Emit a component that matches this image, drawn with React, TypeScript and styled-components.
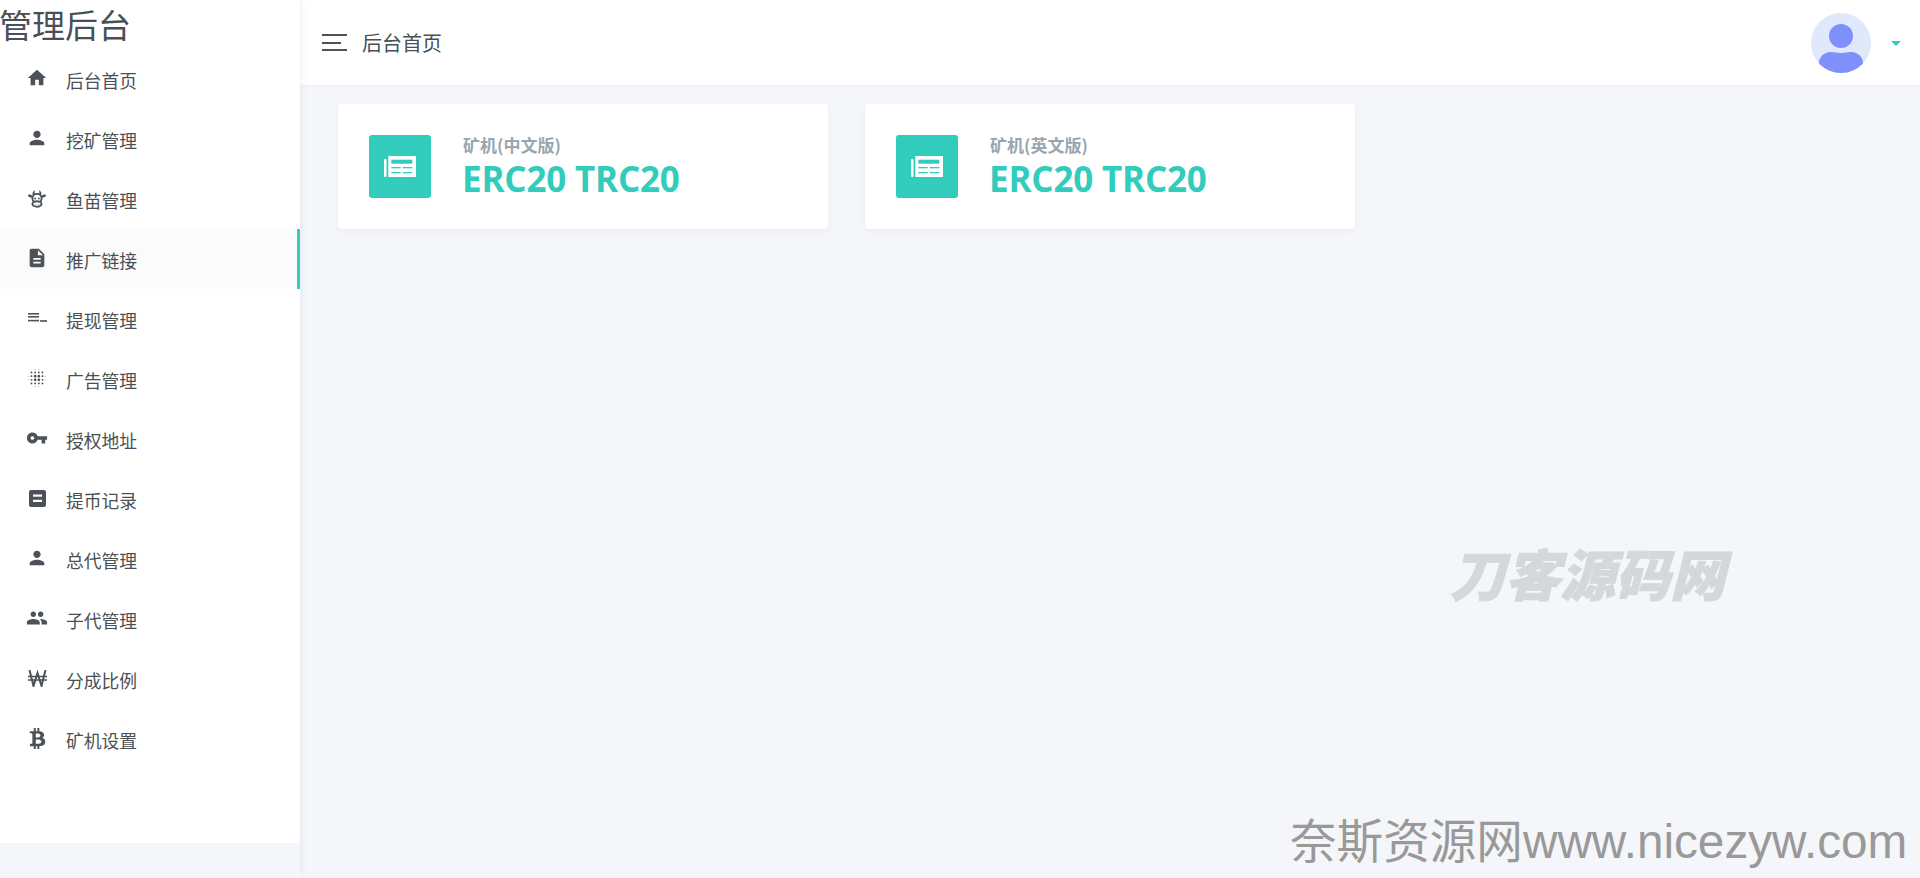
import * as React from "react";
import styled, {createGlobalStyle} from "styled-components";
import {MdHome, MdPerson, MdDescription, MdBlurOn, MdVpnKey, MdPeople} from "react-icons/md";
import {FaBtc} from "react-icons/fa";

const GlobalStyle = createGlobalStyle`
  html, body {
    margin: 0;
    height: 100%;
    overflow: hidden;
    background: #f4f6fa;
    font-family: "Noto Sans CJK SC", "Open Sans", sans-serif;
  }
`;

const Page = styled.div`
  position: relative;
  display: flex;
  width: 1920px;
  height: 878px;
  overflow: hidden;
`;

const Sidebar = styled.aside`
  width: 300px;
  flex-shrink: 0;
  height: 878px;
  box-shadow: 2px 0 6px rgba(60, 70, 100, 0.06);
  position: relative;
  z-index: 2;
`;

const SidebarPanel = styled.div`
  height: 843px;
  background: #fff;
`;

const Brand = styled.div`
  height: 49px;
  box-shadow: 0 1px 0 #f3f4f6;
  font-size: 33px;
  line-height: 49px;
  text-indent: -1px;
  color: #4a4f55;
  white-space: nowrap;
`;

const MenuList = styled.nav`
  display: flex;
  flex-direction: column;
`;

const MenuItem = styled.div<{$active?: boolean}>`
  height: 60px;
  box-sizing: border-box;
  display: flex;
  align-items: center;
  padding-left: 26px;
  background: ${p => (p.$active ? "#fbfbfc" : "#fff")};
  border-right: 3px solid ${p => (p.$active ? "#32ccbc" : "transparent")};
`;

const MenuIcon = styled.span`
  width: 22px;
  height: 24px;
  margin-right: 18px;
  margin-top: -2px;
  display: flex;
  align-items: center;
  justify-content: center;
  color: #4d5259;
  font-size: 22px;
`;

const MenuLabel = styled.span`
  padding-top: 1px;
  font-size: 17.8px;
  line-height: 24px;
  color: #4a4f55;
  white-space: nowrap;
`;

const Main = styled.main`
  flex: 1;
  display: flex;
  flex-direction: column;
`;

const Header = styled.header`
  height: 85px;
  flex-shrink: 0;
  display: flex;
  align-items: center;
  padding: 0 19px 0 22px;
  background: #fff;
  box-shadow: 0 1px 3px rgba(60, 70, 100, 0.05);
`;

const Burger = styled.svg`
  width: 25px;
  height: 17px;
  margin-right: 15px;
  flex-shrink: 0;
`;

const PageTitle = styled.div`
  font-size: 20px;
  color: #4a4f55;
  line-height: 28px;
  flex: 1;
`;

const Avatar = styled.svg`
  width: 60px;
  height: 60px;
  margin-right: 20px;
`;

const Caret = styled.span`
  width: 0;
  height: 0;
  margin-top: 1px;
  border-left: 5px solid transparent;
  border-right: 5px solid transparent;
  border-top: 5px solid #32ccbc;
`;

const Content = styled.div`
  display: flex;
  gap: 37px;
  padding: 19px 38px;
`;

const Card = styled.section`
  width: 490px;
  height: 125px;
  box-sizing: border-box;
  display: flex;
  align-items: center;
  padding: 0 0 0 31px;
  background: #fff;
  border-radius: 4px;
  box-shadow: 0 2px 6px rgba(60, 70, 100, 0.05);
`;

const IconTile = styled.div`
  width: 62px;
  height: 63px;
  margin-right: 32px;
  flex-shrink: 0;
  border-radius: 3px;
  background: #32ccbc;
  display: flex;
  align-items: center;
  justify-content: center;
`;

const CardText = styled.div`
  display: flex;
  flex-direction: column;
  gap: 2px;
`;

const CardLabel = styled.div`
  font-size: 17px;
  line-height: 22px;
  font-weight: 700;
  color: #98a6ad;
`;

const CardValue = styled.div`
  margin-left: -1px;
  font-family: "Open Sans", sans-serif;
  font-size: 35px;
  line-height: 42px;
  font-weight: 700;
  letter-spacing: -0.2px;
  color: #32ccbc;
  white-space: nowrap;
`;

const BrandMark = styled.div`
  position: absolute;
  left: 1450px;
  top: 537px;
  font-size: 55px;
  line-height: 70px;
  font-weight: 900;
  font-style: italic;
  color: #d5d8db;
  -webkit-text-stroke: 1px #d5d8db;
  white-space: nowrap;
`;

const SiteMark = styled.div`
  position: absolute;
  left: 1290px;
  top: 814px;
  font-family: "Liberation Sans", "Noto Sans CJK SC", sans-serif;
  font-size: 47.7px;
  line-height: 56px;
  color: #999;
  white-space: nowrap;
`;

const SiteMarkCjk = styled.span`
  font-size: 46.6px;
`;

function CowIcon() {
  return (
    <svg width="23" height="23" viewBox="0 0 24 24" fill="currentColor">
      <path d="M10.5,18A0.5,0.5 0 0,1 11,18.5A0.5,0.5 0 0,1 10.5,19A0.5,0.5 0 0,1 10,18.5A0.5,0.5 0 0,1 10.5,18M13.5,18A0.5,0.5 0 0,1 14,18.5A0.5,0.5 0 0,1 13.5,19A0.5,0.5 0 0,1 13,18.5A0.5,0.5 0 0,1 13.5,18M10,11A1,1 0 0,1 11,12A1,1 0 0,1 10,13A1,1 0 0,1 9,12A1,1 0 0,1 10,11M14,11A1,1 0 0,1 15,12A1,1 0 0,1 14,13A1,1 0 0,1 13,12A1,1 0 0,1 14,11M18,18C18,20.21 15.31,22 12,22C8.69,22 6,20.21 6,18C6,17.1 6.45,16.27 7.2,15.6C6.45,14.6 6,13.35 6,12L6.12,10.78C5.58,10.93 4.93,10.93 4.4,10.78C3.38,10.5 1.84,9.35 2.07,8.55C2.3,7.75 4.21,7.6 5.23,7.9C5.82,8.07 6.45,8.5 6.82,8.96L7.39,8.15C6.79,7.05 7,4 10,3L9.91,3.14C9.63,3.58 8.91,4.97 9.67,6.47C10.39,6.17 11.17,6 12,6C12.83,6 13.61,6.17 14.33,6.47C15.09,4.97 14.37,3.58 14.09,3.14L14,3C17,4 17.21,7.05 16.61,8.15L17.18,8.96C17.55,8.5 18.18,8.07 18.77,7.9C19.79,7.6 21.7,7.75 21.93,8.55C22.16,9.35 20.62,10.5 19.6,10.78C19.07,10.93 18.42,10.93 17.88,10.78L18,12C18,13.35 17.55,14.6 16.8,15.6C17.55,16.27 18,17.1 18,18M12,16C9.79,16 8,16.9 8,18C8,19.1 9.79,20 12,20C14.21,20 16,19.1 16,18C16,16.9 14.21,16 12,16M12,14C13.12,14 14.17,14.21 15.07,14.56C15.65,13.87 16,13 16,12A4,4 0 0,0 12,8A4,4 0 0,0 8,12C8,13 8.35,13.87 8.93,14.56C9.83,14.21 10.88,14 12,14Z"/>
    </svg>
  );
}

function LinesIcon() {
  return (
    <svg width="19" height="10" viewBox="0 0 19 10" fill="currentColor">
      <rect x="0" y="0" width="11" height="1.600"/>
      <rect x="0" y="3" width="11" height="1.600"/>
      <rect x="0" y="6.800" width="11" height="1.600"/>
      <rect x="12" y="7.200" width="7" height="1.600"/>
    </svg>
  );
}

function NoteIcon() {
  return (
    <svg width="17" height="17" viewBox="0 0 17 17">
      <rect width="17" height="17" rx="2" fill="currentColor"/>
      <rect x="4" y="4.500" width="9" height="2.200" fill="#fff"/>
      <rect x="4" y="9.800" width="9" height="2.200" fill="#fff"/>
    </svg>
  );
}

function WonIcon() {
  return (
    <svg width="19" height="17" viewBox="0 0 19 17" fill="none" stroke="currentColor">
      <path d="M1.500 0L5.500 16L9.500 3L13.500 16L17.500 0" strokeWidth="2"/>
      <path d="M0 6.500H19M0 10H19" strokeWidth="1.500"/>
    </svg>
  );
}

function PaperIcon() {
  return (
    <svg width="32" height="21" viewBox="0 0 32 21">
      <rect x="0" y="3" width="2.500" height="18" rx="1" fill="#fff"/>
      <path d="M4.300 0H32V20C32 20.600 31.600 21 31 21H4.300z" fill="#fff"/>
      <rect x="7.300" y="3.700" width="21" height="4" fill="#32ccbc"/>
      <rect x="7.300" y="11" width="9.400" height="1.300" fill="#32ccbc"/>
      <rect x="18.700" y="11" width="9.600" height="1.300" fill="#32ccbc"/>
      <rect x="7.300" y="16" width="9.400" height="1.300" fill="#32ccbc"/>
      <rect x="18.700" y="16" width="9.600" height="1.300" fill="#32ccbc"/>
    </svg>
  );
}

const menu: {label: string; icon: React.ReactNode; active?: boolean}[] = [
  {label: "后台首页", icon: <MdHome/>},
  {label: "挖矿管理", icon: <MdPerson/>},
  {label: "鱼苗管理", icon: <CowIcon/>},
  {label: "推广链接", icon: <MdDescription/>, active: true},
  {label: "提现管理", icon: <LinesIcon/>},
  {label: "广告管理", icon: <MdBlurOn/>},
  {label: "授权地址", icon: <MdVpnKey/>},
  {label: "提币记录", icon: <NoteIcon/>},
  {label: "总代管理", icon: <MdPerson/>},
  {label: "子代管理", icon: <MdPeople/>},
  {label: "分成比例", icon: <WonIcon/>},
  {label: "矿机设置", icon: <FaBtc size={21}/>},
];

const cards = ["矿机(中文版)", "矿机(英文版)"];

export default function App() {
  return (
    <Page>
      <GlobalStyle/>
      <Sidebar>
        <SidebarPanel>
          <Brand>管理后台</Brand>
          <MenuList>
            {menu.map(item => (
              <MenuItem key={item.label} $active={item.active}>
                <MenuIcon>{item.icon}</MenuIcon>
                <MenuLabel>{item.label}</MenuLabel>
              </MenuItem>
            ))}
          </MenuList>
        </SidebarPanel>
      </Sidebar>
      <Main>
        <Header>
          <Burger viewBox="0 0 25 17" fill="#4d5259">
            <rect x="0" y="0" width="25" height="2"/>
            <rect x="0" y="8" width="19" height="2"/>
            <rect x="0" y="15" width="25" height="2"/>
          </Burger>
          <PageTitle>后台首页</PageTitle>
          <Avatar viewBox="0 0 60 60">
            <defs>
              <clipPath id="avatar-clip"><circle cx="30" cy="30" r="30"/></clipPath>
            </defs>
            <circle cx="30" cy="30" r="30" fill="#e0e8fb"/>
            <g clipPath="url(#avatar-clip)">
              <circle cx="30" cy="23" r="12" fill="#7f8ffb"/>
              <path d="M8 60V50C8 44 13 39 20 39C23 39 26 40 30 40C34 40 37 39 40 39C47 39 52 44 52 50V60z" fill="#7f8ffb"/>
            </g>
          </Avatar>
          <Caret/>
        </Header>
        <Content>
          {cards.map(label => (
            <Card key={label}>
              <IconTile><PaperIcon/></IconTile>
              <CardText>
                <CardLabel>{label}</CardLabel>
                <CardValue>ERC20 TRC20</CardValue>
              </CardText>
            </Card>
          ))}
        </Content>
      </Main>
      <BrandMark>刀客源码网</BrandMark>
      <SiteMark><SiteMarkCjk>奈斯资源网</SiteMarkCjk>www.nicezyw.com</SiteMark>
    </Page>
  );
}
